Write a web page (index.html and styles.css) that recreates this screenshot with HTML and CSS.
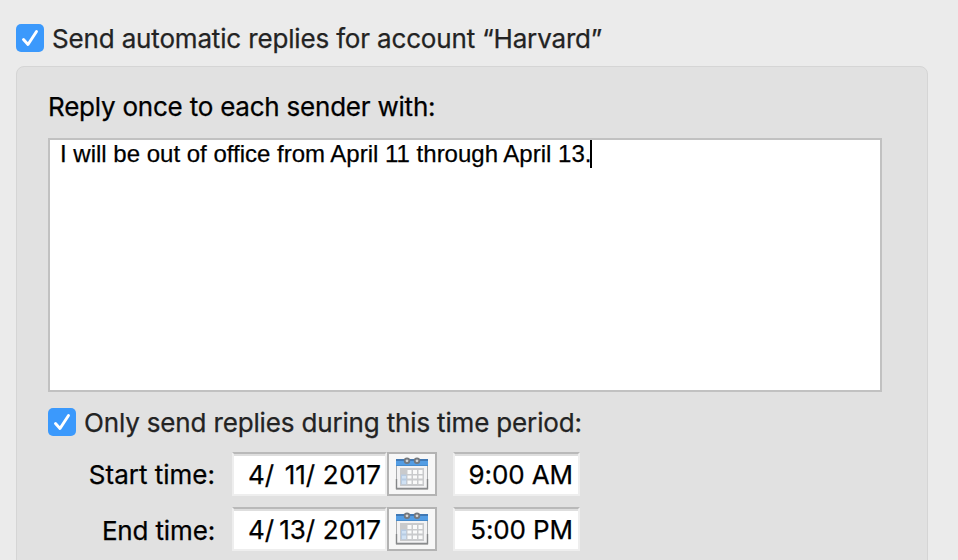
FILE: index.html
```html
<!DOCTYPE html>
<html lang="en">
<head>
    <meta charset="UTF-8">
    <meta name="viewport" content="width=device-width, initial-scale=1.0">
    <title>Automatic Replies</title>
    <link rel="stylesheet" href="styles.css">
</head>
<body>
    <!-- Shared icons -->
    <svg class="symbols">
        <symbol id="calendar" viewBox="0 0 34 34">
            <rect x="1.5" y="3" width="31" height="28.5" fill="#f3f3f4" stroke="#a9abad"/>
            <path d="M1.5 22v9.5h31V22" fill="none" stroke="#838587" stroke-width="1.4"/>
            <path d="M1 32.3h32" stroke="#a9a9a9" stroke-width="1"/>
            <rect x="1" y="2" width="32" height="7" fill="#539de4"/>
            <rect x="1" y="2" width="32" height="2" fill="#4078b4"/>
            <rect x="1" y="8" width="32" height="1" fill="#478bcc"/>
            <rect x="5" y="11" width="24" height="18" fill="#c9cacc"/>
            <path d="M12.5 13h4v4h-4zM18 13h4v4h-4zM23.5 13h4v4h-4zM12.5 18.5h4v3h-4zM18 18.5h4v3h-4zM23.5 18.5h4v3h-4zM12.5 23.5h4V27h-4zM18 23.5h4V27h-4zM23.5 23.5h4V27h-4z" fill="#fafafa"/>
            <path d="M6 17.500h5.500v10H6z" fill="#b7cbe2"/>
            <path d="M7 19h4v2.500H7zM7 23.500h4V27H7z" fill="#d0e1f3"/>
            <circle cx="12" cy="3.800" r="2.300" fill="#d5d7d9" stroke="#73787e" stroke-width="1.800"/>
            <circle cx="22" cy="3.800" r="2.300" fill="#d5d7d9" stroke="#73787e" stroke-width="1.800"/>
        </symbol>
        <symbol id="check" viewBox="0 0 28 28">
            <path d="M7.500 15.500l4.500 5L20.500 7.500" fill="none" stroke="#fff" stroke-width="2.900" stroke-linecap="round" stroke-linejoin="round"/>
        </symbol>
    </svg>

    <div class="option">
        <span class="checkbox"><svg><use href="#check"/></svg></span>
        <span class="option-label">Send automatic replies for account “Harvard”</span>
    </div>

    <div class="panel">
        <div class="reply-label">Reply once to each sender with:</div>
        <div class="reply-text"><span class="message">I will be out of office from April 11 through April 13.</span><span class="caret"></span></div>

        <div class="option period">
            <span class="checkbox"><svg><use href="#check"/></svg></span>
            <span class="option-label">Only send replies during this time period:</span>
        </div>

        <div class="time-row">
            <span class="time-label">Start time:</span>
            <span class="field date"><span>4/</span><span class="day">11/</span><span class="year">2017</span></span>
            <button class="calendar"><svg><use href="#calendar"/></svg></button>
            <span class="field time">9:00 AM</span>
        </div>
        <div class="time-row">
            <span class="time-label end-label">End time:</span>
            <span class="field date"><span>4/</span><span class="day">13/</span><span class="year">2017</span></span>
            <button class="calendar"><svg><use href="#calendar"/></svg></button>
            <span class="field time">5:00 PM</span>
        </div>
    </div>
</body>
</html>
```
FILE: styles.css
```css
* {
    box-sizing: border-box;
}
body {
    margin: 0;
    padding: 24px 30px 0 16px;
    height: 560px;
    overflow: hidden;
    background-color: #ebebeb;
    font-family: Inter, sans-serif;
    font-size: 26px;
    line-height: 30px;
    letter-spacing: -0.16px;
    -webkit-text-stroke: 0.25px;
    color: #000;
    white-space: nowrap;
}
.symbols {
    display: none;
}
.option {
    display: flex;
    align-items: center;
    height: 28px;
    gap: 8px;
    color: #232323;
}
.option-label {
    padding-top: 2px;
}
.checkbox {
    width: 28px;
    height: 28px;
    border-radius: 5px;
    background-color: #3b99fc;
}
.checkbox svg {
    display: block;
    width: 28px;
    height: 28px;
}
.panel {
    margin-top: 14px;
    height: 520px;
    padding: 25px 45px 0 31px;
    border: 1px solid #d5d5d5;
    border-radius: 8px;
    background-color: #e1e1e1;
}
.reply-label {
    letter-spacing: -0.22px;
}
.reply-text {
    display: flex;
    margin-top: 16px;
    height: 254px;
    padding: 0 10px;
    border: 2px solid #c1c1c1;
    background-color: #fff;
    font-family: "Liberation Sans", Arial, sans-serif;
    font-size: 24px;
    line-height: 28px;
    letter-spacing: 0;
}
.caret {
    width: 2px;
    height: 28px;
    margin-left: -1px;
    background-color: #000;
}
.period {
    margin-top: 16px;
}
.time-row {
    display: flex;
    height: 44px;
    margin-bottom: 11px;
    line-height: 42px;
}
.period + .time-row {
    margin-top: 16px;
}
.time-label {
    width: 184px;
    padding-right: 17px;
    padding-top: 2px;
    text-align: right;
    letter-spacing: 0;
}
.end-label {
    padding-top: 3px;
    letter-spacing: -0.15px;
}
.field {
    height: 44px;
    background-color: #fff;
    border: 2px solid #eee;
    border-top-color: #b9b9b9;
    box-shadow: inset 0 2px #dedede;
}
.date {
    display: flex;
    width: 155px;
    padding-left: 14px;
}
.day {
    width: 41px;
    text-align: right;
}
.year {
    margin-left: 8px;
    letter-spacing: 0.2px;
}
.calendar {
    width: 50px;
    height: 44px;
    padding: 3px 6px;
    border: 2px solid #b3b3b3;
    background-color: #f7f7f7;
}
.calendar svg {
    display: block;
    width: 34px;
    height: 34px;
}
.time {
    width: 127px;
    margin-left: 16px;
    padding-right: 5px;
    text-align: right;
    letter-spacing: -0.1px;
}
```
